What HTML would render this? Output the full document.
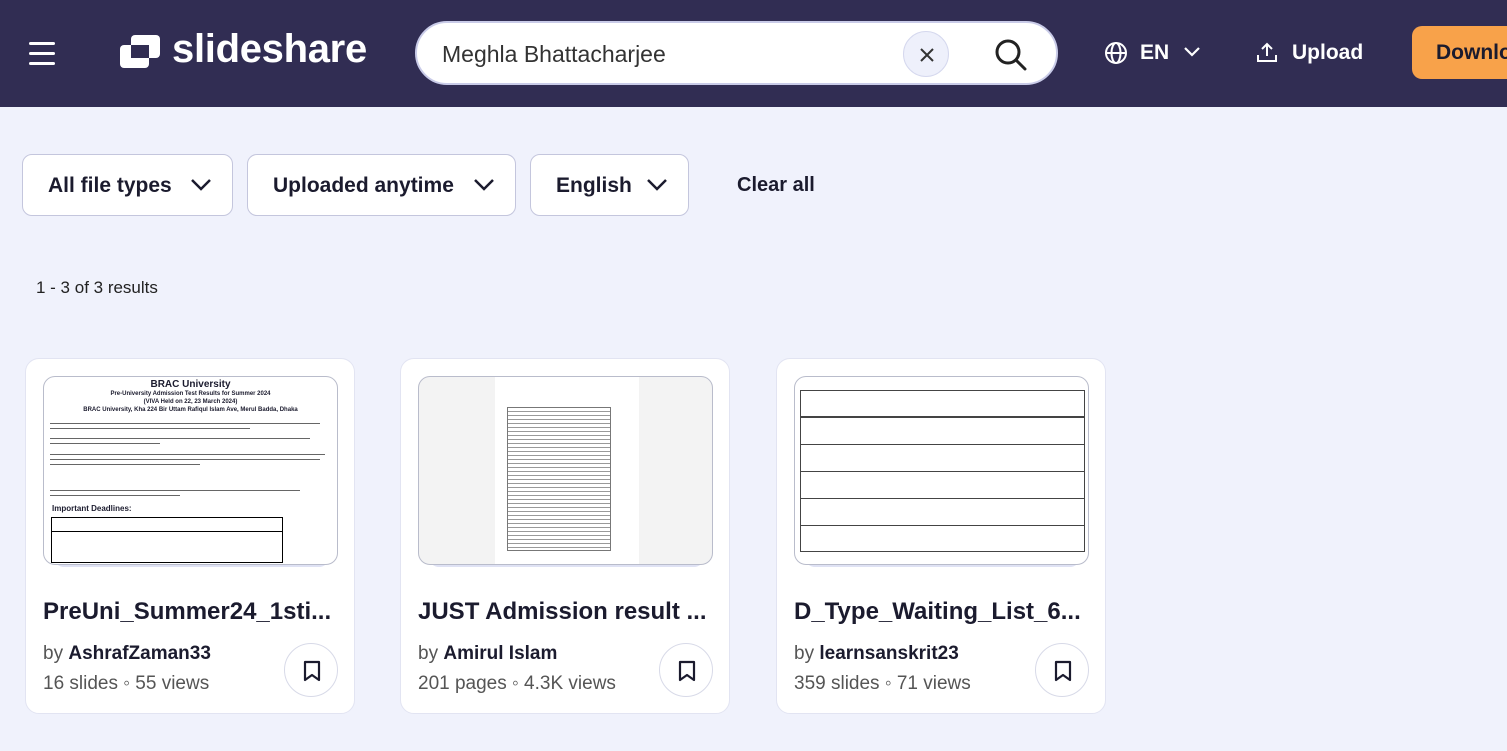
<!DOCTYPE html>
<html><head><meta charset="utf-8"><style>
*{box-sizing:border-box;margin:0;padding:0}
body{width:1507px;height:751px;overflow:hidden;background:#f0f2fc;font-family:"Liberation Sans",Arial,sans-serif;color:#1b1b2e;position:relative}
.hdr{position:absolute;left:0;top:0;width:1507px;height:107px;background:#312d53}
.abs{position:absolute}
.ham span{position:absolute;left:29px;width:26px;height:3px;background:#fff;border-radius:2px}
.logo{left:172px;top:27px;color:#fff;font-size:40px;font-weight:bold;letter-spacing:-0.3px}
.search{left:415px;top:21px;width:643px;height:64px;background:#fff;border-radius:32px;border:2px solid #c9cbe8}
.search .t{position:absolute;left:25px;top:18px;font-size:23px;color:#333}
.xbtn{left:486px;top:8px;width:46px;height:46px;border-radius:50%;background:#eef0fb;border:1px solid #d5d8ee}
.nav{color:#fff;font-size:21px;font-weight:bold}
.dl{left:1412px;top:26px;width:120px;height:53px;background:#f8a24a;border-radius:10px;font-size:21px;font-weight:bold;color:#1b1b2e;padding:15px 0 0 24px}
.filt{top:154px;height:62px;background:#fff;border:1px solid #c4c6dd;border-radius:10px;font-size:21px;font-weight:bold;padding:19px 0 0 25px}
.filt svg{position:absolute;right:20px;top:23px}
.card{top:358px;width:330px;height:356px;background:#fff;border:1px solid #e2e4f2;border-radius:14px}
.stack{position:absolute;left:28px;top:196px;width:275px;height:12px;background:#dfe2f4;border-radius:0 0 10px 10px}
.thumb{position:absolute;left:17px;top:17px;width:295px;height:189px;background:#fff;border:1px solid #b9bccb;border-radius:12px;overflow:hidden}
.title{position:absolute;left:17px;top:239px;font-size:24px;font-weight:bold;white-space:nowrap}
.by{position:absolute;left:17px;top:284px;font-size:19px;color:#555}
.by b{color:#1b1b2e}
.meta{position:absolute;left:17px;top:314px;font-size:19px;color:#555}
.bm{position:absolute;left:258px;top:284px;width:54px;height:54px;border-radius:50%;border:1px solid #d8dae8;background:#fff}
.bm svg{position:absolute;left:18px;top:16px}
.ln{position:absolute;height:2px;background:#888}
</style></head><body>
<div class="hdr">
<div class="ham"><span style="top:42px;height:2.5px"></span><span style="top:52px;height:2.5px"></span><span style="top:62px;height:2.5px"></span></div>
<svg class="abs" style="left:120px;top:35px" width="40" height="33" viewBox="0 0 40 33"><rect x="11" y="0" width="29" height="23" rx="4" fill="#fff"/><rect x="0" y="10" width="29" height="23" rx="4" fill="#fff"/><rect x="11" y="10" width="18" height="13" fill="#312d53"/></svg>
<div class="abs logo">slideshare</div>
<div class="abs search"><div class="t">Meghla Bhattacharjee</div>
<div class="abs xbtn"><svg style="position:absolute;left:15px;top:15px" width="16" height="16"><path d="M2 2L14 14M14 2L2 14" stroke="#333" stroke-width="2"/></svg></div>
<svg class="abs" style="left:577px;top:15px" width="34" height="34" viewBox="0 0 34 34"><circle cx="14" cy="14" r="11" fill="none" stroke="#222" stroke-width="3"/><path d="M22 22L31 31" stroke="#222" stroke-width="3" stroke-linecap="round"/></svg>
</div>
<svg class="abs" style="left:1104px;top:41px" width="24" height="24" viewBox="0 0 24 24" fill="none" stroke="#fff" stroke-width="2"><circle cx="12" cy="12" r="10"/><ellipse cx="12" cy="12" rx="4.5" ry="10"/><path d="M2 12h20"/></svg>
<div class="abs nav" style="left:1140px;top:41px">EN</div>
<svg class="abs" style="left:1183px;top:46px" width="18" height="12"><path d="M2 2l7 7 7-7" fill="none" stroke="#fff" stroke-width="2.2"/></svg>
<svg class="abs" style="left:1256px;top:41px" width="22" height="22" viewBox="0 0 22 22" fill="none" stroke="#fff" stroke-width="2"><path d="M11 15V3M6 8l5-5 5 5M2 14v6h18v-6"/></svg>
<div class="abs nav" style="left:1292px;top:41px">Upload</div>
<div class="abs dl">Download</div>
</div>

<div class="abs filt" style="left:22px;width:211px">All file types<svg width="22" height="14"><path d="M2 2l9 9 9-9" fill="none" stroke="#1b1b2e" stroke-width="2.5"/></svg></div>
<div class="abs filt" style="left:247px;width:269px">Uploaded anytime<svg width="22" height="14"><path d="M2 2l9 9 9-9" fill="none" stroke="#1b1b2e" stroke-width="2.5"/></svg></div>
<div class="abs filt" style="left:530px;width:159px">English<svg width="22" height="14"><path d="M2 2l9 9 9-9" fill="none" stroke="#1b1b2e" stroke-width="2.5"/></svg></div>
<div class="abs" style="left:737px;top:174px;font-size:20px;font-weight:bold">Clear all</div>
<div class="abs" style="left:36px;top:278px;font-size:17px;color:#222">1 - 3 of 3 results</div>

<div class="abs card" style="left:25px"><div class="stack"></div>
<div class="thumb">
<div style="text-align:center;font-size:10px;font-weight:bold;margin-top:2px">BRAC University</div>
<div style="text-align:center;font-size:6px;font-weight:bold;line-height:8px">Pre-University Admission Test Results for Summer 2024<br>(VIVA Held on 22, 23 March 2024)<br>BRAC University, Kha 224 Bir Uttam Rafiqul Islam Ave, Merul Badda, Dhaka</div>
<div class="ln" style="left:6px;top:46px;width:270px;height:1px;background:#666"></div><div class="ln" style="left:6px;top:51px;width:200px;height:1px;background:#666"></div>
<div class="ln" style="left:6px;top:61px;width:260px;height:1px;background:#666"></div><div class="ln" style="left:6px;top:66px;width:110px;height:1px;background:#666"></div>
<div class="ln" style="left:6px;top:77px;width:275px;height:1px;background:#666"></div><div class="ln" style="left:6px;top:82px;width:270px;height:1px;background:#666"></div><div class="ln" style="left:6px;top:87px;width:150px;height:1px;background:#666"></div>
<div class="ln" style="left:6px;top:113px;width:250px;height:1px;background:#666"></div><div class="ln" style="left:6px;top:118px;width:130px;height:1px;background:#666"></div>
<div style="position:absolute;left:8px;top:127px;font-size:8px;font-weight:bold">Important Deadlines:</div>
<div style="position:absolute;left:7px;top:140px;width:232px;height:46px;border:1px solid #000"></div>
<div style="position:absolute;left:7px;top:154px;width:232px;height:1px;background:#000"></div>
</div>
<div class="title">PreUni_Summer24_1sti...</div>
<div class="by">by <b>AshrafZaman33</b></div>
<div class="meta">16 slides ◦ 55 views</div>
<div class="bm"><svg width="18" height="22" viewBox="0 0 18 22"><path d="M2 2h14v18l-7-5-7 5z" fill="none" stroke="#1b1b2e" stroke-width="2.2" stroke-linejoin="round"/></svg></div>
</div>

<div class="abs card" style="left:400px"><div class="stack"></div>
<div class="thumb" style="background:#f3f3f3">
<div style="position:absolute;left:76px;top:0;width:144px;height:189px;background:#fff"></div>
<div style="position:absolute;left:88px;top:30px;width:104px;height:144px;background:repeating-linear-gradient(#fff 0 3px,#999 3px 4px);border:1px solid #777"></div>
</div>
<div class="title">JUST Admission result ...</div>
<div class="by">by <b>Amirul Islam</b></div>
<div class="meta">201 pages ◦ 4.3K views</div>
<div class="bm"><svg width="18" height="22" viewBox="0 0 18 22"><path d="M2 2h14v18l-7-5-7 5z" fill="none" stroke="#1b1b2e" stroke-width="2.2" stroke-linejoin="round"/></svg></div>
</div>

<div class="abs card" style="left:776px"><div class="stack"></div>
<div class="thumb">
<div style="position:absolute;left:5px;top:13px;width:285px;height:162px;border:1px solid #444;background:repeating-linear-gradient(#fff 0 26px,#444 26px 27px)"></div>
<div style="position:absolute;left:5px;top:13px;width:285px;height:27px;background:#fff;border:1px solid #444"></div>
</div>
<div class="title">D_Type_Waiting_List_6...</div>
<div class="by">by <b>learnsanskrit23</b></div>
<div class="meta">359 slides ◦ 71 views</div>
<div class="bm"><svg width="18" height="22" viewBox="0 0 18 22"><path d="M2 2h14v18l-7-5-7 5z" fill="none" stroke="#1b1b2e" stroke-width="2.2" stroke-linejoin="round"/></svg></div>
</div>
</body></html>
